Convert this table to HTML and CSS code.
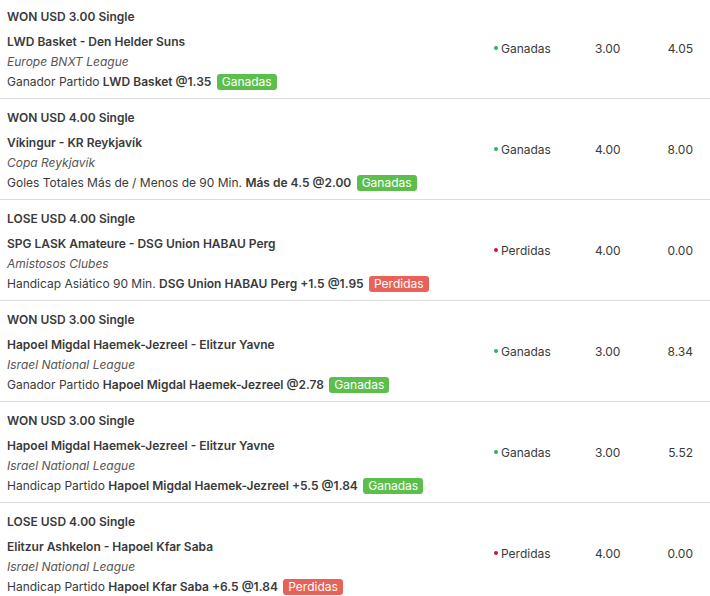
FILE: index.html
```html
<!DOCTYPE html>
<html lang="es">
<head>
<meta charset="utf-8">
<link rel="stylesheet" href="styles.css">
</head>
<body>
<div class="list">
  <div class="bet">
    <div class="info">
      <div class="head">WON USD 3.00 Single</div>
      <div class="match">LWD Basket - Den Helder Suns</div>
      <div class="league">Europe BNXT League</div>
      <div class="sel">Ganador Partido <b>LWD Basket @1.35</b> <span class="badge won">Ganadas</span></div>
    </div>
    <div class="status"><span class="dot won"></span>Ganadas</div>
    <div class="stake">3.00</div>
    <div class="ret">4.05</div>
  </div>
  <div class="bet">
    <div class="info">
      <div class="head">WON USD 4.00 Single</div>
      <div class="match">Víkingur - KR Reykjavík</div>
      <div class="league">Copa Reykjavík</div>
      <div class="sel">Goles Totales Más de / Menos de 90 Min. <b>Más de 4.5 @2.00</b> <span class="badge won">Ganadas</span></div>
    </div>
    <div class="status"><span class="dot won"></span>Ganadas</div>
    <div class="stake">4.00</div>
    <div class="ret">8.00</div>
  </div>
  <div class="bet">
    <div class="info">
      <div class="head">LOSE USD 4.00 Single</div>
      <div class="match">SPG LASK Amateure - DSG Union HABAU Perg</div>
      <div class="league">Amistosos Clubes</div>
      <div class="sel">Handicap Asiático 90 Min. <b>DSG Union HABAU Perg +1.5 @1.95</b> <span class="badge lost">Perdidas</span></div>
    </div>
    <div class="status"><span class="dot lost"></span>Perdidas</div>
    <div class="stake">4.00</div>
    <div class="ret">0.00</div>
  </div>
  <div class="bet">
    <div class="info">
      <div class="head">WON USD 3.00 Single</div>
      <div class="match">Hapoel Migdal Haemek-Jezreel - Elitzur Yavne</div>
      <div class="league">Israel National League</div>
      <div class="sel">Ganador Partido <b>Hapoel Migdal Haemek-Jezreel @2.78</b> <span class="badge won">Ganadas</span></div>
    </div>
    <div class="status"><span class="dot won"></span>Ganadas</div>
    <div class="stake">3.00</div>
    <div class="ret">8.34</div>
  </div>
  <div class="bet">
    <div class="info">
      <div class="head">WON USD 3.00 Single</div>
      <div class="match">Hapoel Migdal Haemek-Jezreel - Elitzur Yavne</div>
      <div class="league">Israel National League</div>
      <div class="sel">Handicap Partido <b>Hapoel Migdal Haemek-Jezreel +5.5 @1.84</b> <span class="badge won">Ganadas</span></div>
    </div>
    <div class="status"><span class="dot won"></span>Ganadas</div>
    <div class="stake">3.00</div>
    <div class="ret">5.52</div>
  </div>
  <div class="bet last">
    <div class="info">
      <div class="head">LOSE USD 4.00 Single</div>
      <div class="match">Elitzur Ashkelon - Hapoel Kfar Saba</div>
      <div class="league">Israel National League</div>
      <div class="sel">Handicap Partido <b>Hapoel Kfar Saba +6.5 @1.84</b> <span class="badge lost">Perdidas</span></div>
    </div>
    <div class="status"><span class="dot lost"></span>Perdidas</div>
    <div class="stake">4.00</div>
    <div class="ret">0.00</div>
  </div>
</div>
</body>
</html>
```
FILE: styles.css
```css
html, body {
  margin: 0;
  padding: 0;
  background: #fff;
}
* {
  box-sizing: border-box;
}
body {
  font-family: Inter, "Noto Sans", sans-serif;
  font-size: 12px;
  color: #3a3a3a;
}
.list {
  display: flex;
  flex-direction: column;
  margin-top: -2px;
}
.bet {
  display: flex;
  align-items: center;
  border-bottom: 1px solid #dcdcdc;
  padding: 9px 0 6px 7px;
}
.info {
  flex: 1;
  min-width: 0;
}
.head {
  font-weight: 600;
  line-height: 20px;
  margin-bottom: 5px;
}
.match {
  font-weight: 600;
  line-height: 20px;
}
.league {
  font-style: italic;
  color: #555;
  line-height: 20px;
}
.sel {
  line-height: 20px;
}
.sel b {
  font-weight: 600;
}
.badge {
  display: inline-block;
  color: #fff;
  line-height: 16px;
  padding: 0 5px;
  border-radius: 3px;
  margin-left: 2px;
}
.badge.won { background: #5cbf4c; }
.badge.lost { background: #e8625a; }
.status {
  width: 100px;
  display: flex;
  align-items: center;
  padding-left: 2px;
  margin-top: -3px;
}
.dot {
  width: 4px;
  height: 4px;
  border-radius: 50%;
  margin-right: 3px;
}
.dot.won { background: #28b660; }
.dot.lost { background: #c0193f; }
.stake {
  width: 47px;
  padding-left: 3px;
  margin-top: -3px;
}
.ret {
  width: 71px;
  text-align: right;
  padding-right: 17px;
  margin-top: -3px;
}
```
